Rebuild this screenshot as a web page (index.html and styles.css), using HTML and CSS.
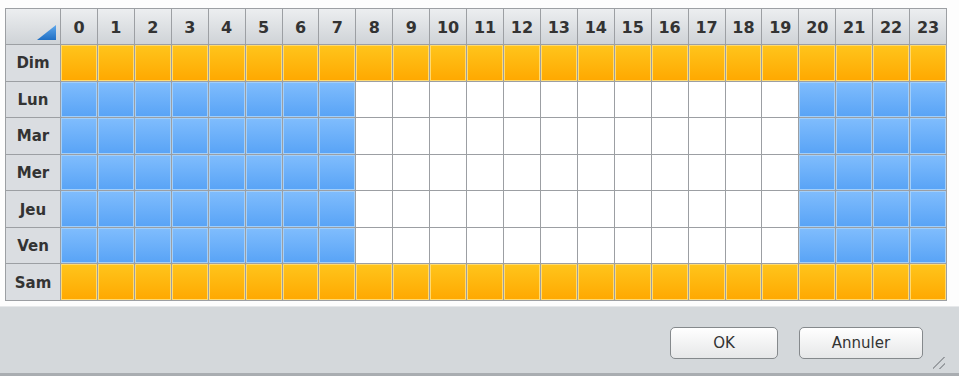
FILE: index.html
```html
<!DOCTYPE html>
<html lang="fr">
<head>
    <meta charset="UTF-8">
    <title>Planification</title>
    <link rel="stylesheet" href="styles.css">
</head>
<body>
    <div class="dialog">
        <div class="content">
            <div class="schedule" id="schedule">
                <div class="head corner">
                    <svg class="corner-arrow" width="19" height="15" viewBox="0 0 19 15">
                        <defs>
                            <linearGradient id="tri" x1="0" y1="0" x2="0" y2="1">
                                <stop offset="0" stop-color="#5fa8ec"/>
                                <stop offset="1" stop-color="#1f6fc4"/>
                            </linearGradient>
                        </defs>
                        <polygon points="19,0 19,15 0,15" fill="url(#tri)"/>
                    </svg>
                </div>
            </div>
        </div>
        <div class="footer">
            <button class="btn">OK</button>
            <button class="btn btn-wide">Annuler</button>
            <span class="grip"></span>
        </div>
    </div>

    <script>
        const days = ['Dim', 'Lun', 'Mar', 'Mer', 'Jeu', 'Ven', 'Sam'];
        const grid = document.getElementById('schedule');

        // ligne des heures
        for (let h = 0; h < 24; h++) {
            const cell = document.createElement('div');
            cell.className = 'head';
            cell.textContent = h;
            grid.appendChild(cell);
        }

        // une ligne par jour
        days.forEach((day, d) => {
            const label = document.createElement('div');
            label.className = 'head day';
            label.textContent = day;
            grid.appendChild(label);

            for (let h = 0; h < 24; h++) {
                const cell = document.createElement('div');
                if (d === 0 || d === 6) {
                    cell.className = 'cell weekend';
                } else if (h < 8 || h >= 20) {
                    cell.className = 'cell night';
                } else {
                    cell.className = 'cell';
                }
                grid.appendChild(cell);
            }
        });
    </script>
</body>
</html>
```

FILE: styles.css
```css
body {
    margin: 0;
    background-color: #fdfdfd;
    font-family: "DejaVu Sans", Verdana, sans-serif;
}
.dialog {
    display: flex;
    flex-direction: column;
    height: 376px;
}
.content {
    padding: 8px 13px 5px 5px;
}
.schedule {
    display: grid;
    grid-template-columns: 54px repeat(24, 1fr);
    grid-template-rows: 35px repeat(7, 1fr);
    gap: 1px;
    height: 293px;
    width: 942px;
    box-sizing: border-box;
    background-color: #9c9fa3;
    border: 1px solid #9c9fa3;
}
.head {
    display: flex;
    align-items: center;
    justify-content: center;
    background: linear-gradient(#eceef0, #cfd3d7);
    color: #333333;
    font-weight: bold;
    font-size: 16px;
    padding-top: 1px;
}
.corner {
    position: relative;
}
.corner-arrow {
    position: absolute;
    right: 4px;
    bottom: 4px;
}
.day {
    background: #dadde1;
    font-size: 15px;
}
.cell {
    background-color: #ffffff;
}
.weekend {
    background: linear-gradient(#ffc51c, #ffa800);
    box-shadow: inset 0 0 0 1px #ffda70;
}
.night {
    background: linear-gradient(#80bdfd, #58a3f6);
    box-shadow: inset 0 0 0 1px #a3cff9;
}
.footer {
    flex: 1;
    position: relative;
    display: flex;
    justify-content: flex-end;
    align-items: center;
    gap: 21px;
    padding: 6px 36px 0 0;
    background-color: #d4d8db;
    border-top: 1px solid #e6e8ea;
    border-bottom: 3px solid #a9adb1;
}
.btn {
    width: 108px;
    height: 32px;
    background: linear-gradient(#ffffff, #e6e7e8);
    border: 1px solid #85898c;
    border-radius: 5px;
    color: #333333;
    font-family: "DejaVu Sans", Verdana, sans-serif;
    font-size: 15px;
}
.btn-wide {
    width: 124px;
}
.grip {
    position: absolute;
    right: 14px;
    bottom: 4px;
    width: 12px;
    height: 12px;
    background: linear-gradient(135deg, transparent 45%, #9a9ea2 45%, #9a9ea2 52%, transparent 52%, transparent 72%, #9a9ea2 72%, #9a9ea2 80%, transparent 80%);
}
```
